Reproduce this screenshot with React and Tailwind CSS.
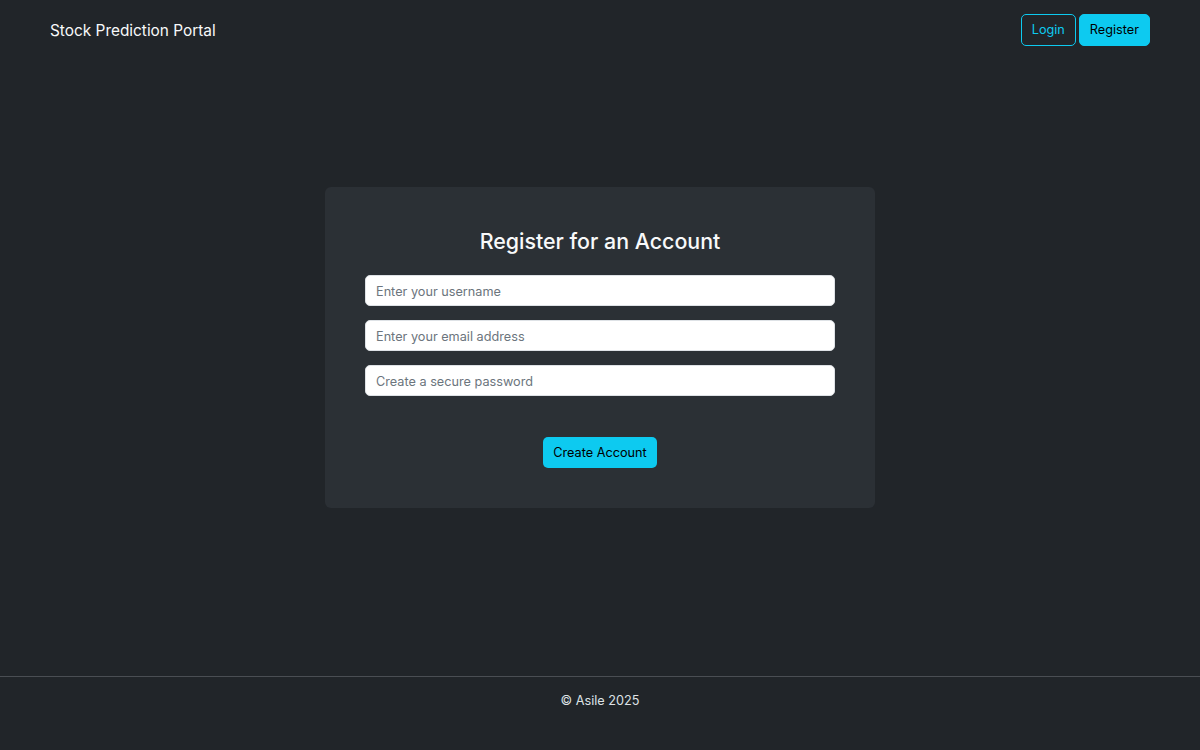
export default function App() {
  return (
    <div className="min-h-screen flex flex-col bg-[#212529] text-[#dee2e6]" style={{ fontFamily: 'Inter, "Noto Sans", sans-serif' }}>
      {/* Navbar */}
      <header className="h-[60px] flex items-center justify-between px-[50px]">
        <a className="text-[15.4px] text-[#f8f9fa] pt-[2px]">Stock Prediction Portal</a>
        <div className="flex items-center gap-[3px]">
          <button className="h-[32px] px-[10px] rounded-[5px] border border-[#0dcaf0] text-[#0dcaf0] text-[12.7px]">Login</button>
          <button className="h-[32px] px-[10px] rounded-[5px] border border-[#0dcaf0] bg-[#0dcaf0] text-black text-[12.7px]">Register</button>
        </div>
      </header>

      {/* Register card */}
      <main className="flex-1 pt-[127px]">
        <div className="w-[550px] mx-auto rounded-[6px] bg-[#2b3035] p-[40px]">
          <h3 className="text-center text-[21.4px] leading-[28px] text-[#f8f9fa] font-medium mb-[20px]">Register for an Account</h3>
          <form className="flex flex-col gap-[14px]">
            <input className="h-[31px] w-full rounded-[5px] border border-[#dee2e6] bg-white px-[10px] pt-[2px] text-[12.7px] text-[#212529] placeholder:text-[#6c757d] outline-none" placeholder="Enter your username" />
            <input className="h-[31px] w-full rounded-[5px] border border-[#dee2e6] bg-white px-[10px] pt-[2px] text-[12.7px] text-[#212529] placeholder:text-[#6c757d] outline-none" placeholder="Enter your email address" />
            <input type="password" className="h-[31px] w-full rounded-[5px] border border-[#dee2e6] bg-white px-[10px] pt-[2px] text-[12.7px] text-[#212529] placeholder:text-[#6c757d] outline-none" placeholder="Create a secure password" />
          </form>
          <div className="flex justify-center mt-[41px]">
            <button className="h-[31px] px-[10px] rounded-[5px] bg-[#0dcaf0] text-black text-[12.7px]">Create Account</button>
          </div>
        </div>
      </main>

      {/* Footer */}
      <footer className="h-[74px] border-t border-[#4a4e53] pt-[15px]">
        <p className="text-center text-[12.7px] leading-[18px] text-[#dee2e6]">© Asile 2025</p>
      </footer>
    </div>
  );
}
